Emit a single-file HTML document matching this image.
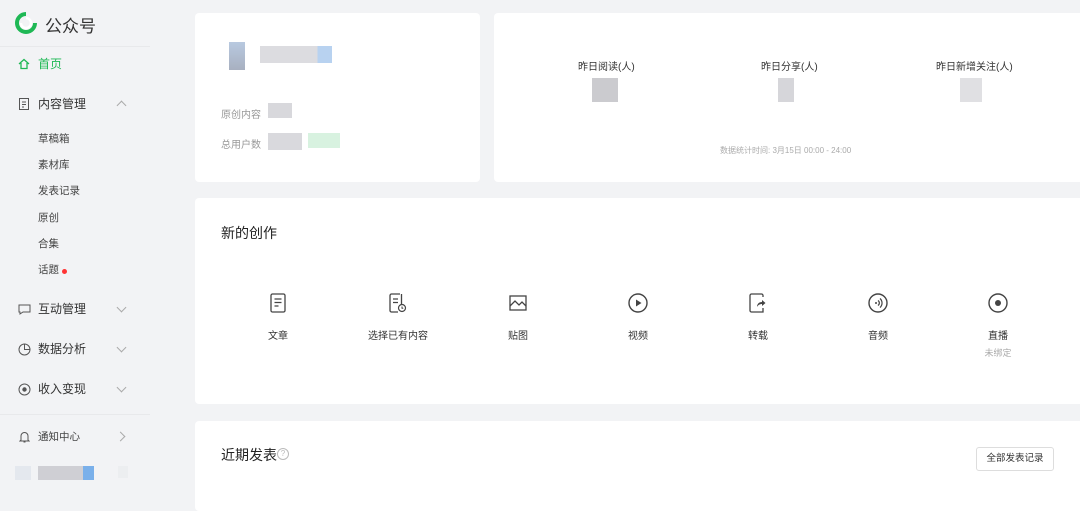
<!DOCTYPE html>
<html><head><meta charset="utf-8"><style>
*{margin:0;padding:0;box-sizing:border-box}
body{width:1080px;height:496px;overflow:hidden;background:#f2f3f5;font-family:"Liberation Sans","Noto Sans CJK SC",sans-serif;color:#333;position:relative}
.a{position:absolute}
.card{position:absolute;background:#fff;border-radius:4px}
.nav{position:absolute;left:38px;font-size:12px;color:#333;line-height:14px}
.sub{position:absolute;left:38px;font-size:10.5px;color:#444;line-height:13px}
.ch{position:absolute;left:118px;width:7px;height:7px;border-right:1px solid #aaa;border-bottom:1px solid #aaa}
.blk{position:absolute}
.it{position:absolute;top:293px;width:120px;text-align:center;font-size:10px;color:#333}
.it svg{display:block;margin:0 auto 14px}
</style></head><body>
<svg class="a" style="left:14px;top:12px" width="24" height="22" viewBox="0 0 24 22"><path d="M12 2a9 9 0 1 0 9 9" stroke="#1fb855" stroke-width="4" fill="none"/><path d="M12 6a5 5 0 1 1-5 5" stroke="#fff" stroke-width="2.5" fill="none"/></svg>
<div class="a" style="left:45px;top:12px;font-size:17px;color:#333">公众号</div>
<div class="a" style="left:0;top:46px;width:150px;height:1px;background:#e8e9eb"></div>
<svg class="a" style="left:18px;top:58px" width="12" height="12" viewBox="0 0 12 12"><path d="M1 6L6 1.5 11 6M3 5v5.5h6V5" stroke="#1fb855" stroke-width="1.3" fill="none"/></svg>
<div class="nav" style="top:57px;color:#1fb855">首页</div>
<svg class="a" style="left:19px;top:98px" width="10" height="12"><rect x=".5" y=".5" width="9" height="11" stroke="#555" fill="none"/><path d="M3 4h4M3 6.5h4M3 9h2" stroke="#555"/></svg>
<div class="nav" style="top:97px">内容管理</div>
<div class="ch" style="top:102px;transform:rotate(-135deg)"></div>
<div class="sub" style="top:133px">草稿箱</div>
<div class="sub" style="top:159px">素材库</div>
<div class="sub" style="top:185px">发表记录</div>
<div class="sub" style="top:212px">原创</div>
<div class="sub" style="top:238px">合集</div>
<div class="sub" style="top:264px">话题</div>
<div class="a" style="left:62px;top:269px;width:5px;height:5px;border-radius:50%;background:#f33"></div>
<svg class="a" style="left:18px;top:304px" width="13" height="11"><path d="M1 1h11v7H5l-3 2V8H1z" stroke="#555" fill="none"/></svg>
<div class="nav" style="top:302px">互动管理</div>
<div class="ch" style="top:304px;transform:rotate(45deg)"></div>
<svg class="a" style="left:18px;top:343px" width="13" height="13"><circle cx="6.5" cy="6.5" r="5.5" stroke="#555" fill="none"/><path d="M6.5 1v5.5H12" stroke="#555" fill="none"/></svg>
<div class="nav" style="top:342px">数据分析</div>
<div class="ch" style="top:344px;transform:rotate(45deg)"></div>
<svg class="a" style="left:18px;top:383px" width="13" height="13"><circle cx="6.5" cy="6.5" r="5.5" stroke="#555" fill="none"/><circle cx="6.5" cy="6.5" r="2.2" fill="#555"/></svg>
<div class="nav" style="top:382px">收入变现</div>
<div class="ch" style="top:384px;transform:rotate(45deg)"></div>
<div class="a" style="left:0;top:414px;width:150px;height:1px;background:#e8e9eb"></div>
<svg class="a" style="left:19px;top:431px" width="11" height="12"><path d="M2 9V5a3.5 3.5 0 0 1 7 0v4l1 1H1zM4.5 11h2" stroke="#555" fill="none"/></svg>
<div class="sub" style="top:431px">通知中心</div>
<div class="ch" style="top:433px;left:117px;transform:rotate(-45deg)"></div>
<div class="blk" style="left:15px;top:466px;width:16px;height:14px;background:#e4e8ee"></div>
<div class="blk" style="left:38px;top:466px;width:56px;height:14px;background:linear-gradient(90deg,#cfcfd4 80%,#7ab0ea 80%)"></div>
<div class="blk" style="left:118px;top:466px;width:10px;height:12px;background:#eceef0"></div>

<div class="card" style="left:195px;top:13px;width:285px;height:169px"></div>
<div class="blk" style="left:229px;top:42px;width:16px;height:28px;background:linear-gradient(#b8c9e0,#a8b0c0)"></div>
<div class="blk" style="left:260px;top:46px;width:72px;height:17px;background:linear-gradient(90deg,#dcdce0 80%,#b8d2f0 80%)"></div>
<div class="a" style="left:221px;top:106px;font-size:10px;color:#999">原创内容</div>
<div class="blk" style="left:268px;top:103px;width:24px;height:15px;background:#d8d8dc"></div>
<div class="a" style="left:221px;top:136px;font-size:10px;color:#999">总用户数</div>
<div class="blk" style="left:268px;top:133px;width:34px;height:17px;background:#d9d9dd"></div>
<div class="blk" style="left:308px;top:133px;width:32px;height:15px;background:#d8f2e0"></div>
<div class="card" style="left:494px;top:13px;width:600px;height:169px"></div>
<div class="a" style="left:578px;top:58px;font-size:10px">昨日阅读(人)</div>
<div class="blk" style="left:592px;top:78px;width:26px;height:24px;background:#cbcbcf"></div>
<div class="a" style="left:761px;top:58px;font-size:10px">昨日分享(人)</div>
<div class="blk" style="left:778px;top:78px;width:16px;height:24px;background:#d6d6da"></div>
<div class="a" style="left:936px;top:58px;font-size:10px">昨日新增关注(人)</div>
<div class="blk" style="left:960px;top:78px;width:22px;height:24px;background:#e0e0e3"></div>
<div class="a" style="left:720px;top:145px;font-size:8px;color:#aaa">数据统计时间: 3月15日 00:00 - 24:00</div>
<div class="card" style="left:195px;top:198px;width:900px;height:206px"></div>
<div class="a" style="left:221px;top:223px;font-size:14px;color:#222">新的创作</div>
<div class="it" style="left:218px"><svg width="16" height="20"><rect x="1" y="1" width="14" height="18" rx="1.5" stroke="#444" stroke-width="1.3" fill="none"/><path d="M4.5 6h7M4.5 9.5h7M4.5 13h4" stroke="#444" stroke-width="1.3"/></svg>文章</div>
<div class="it" style="left:338px"><svg width="18" height="20"><path d="M11 1H2.5A1.5 1.5 0 0 0 1 2.5v15A1.5 1.5 0 0 0 2.5 19H9M12.5 1v10" stroke="#444" stroke-width="1.3" fill="none"/><path d="M4 6h5M4 9.5h5" stroke="#444" stroke-width="1.3"/><circle cx="13" cy="15" r="3.5" stroke="#444" stroke-width="1.2" fill="#fff"/><path d="M13 13.5v1.7h1.3" stroke="#444" fill="none"/></svg>选择已有内容</div>
<div class="it" style="left:458px"><svg width="20" height="20"><rect x="2" y="3" width="16" height="14" stroke="#444" stroke-width="1.3" fill="none"/><path d="M2 13l5-5 4 4 3-3 4 4" stroke="#444" stroke-width="1.3" fill="none"/></svg>贴图</div>
<div class="it" style="left:578px"><svg width="20" height="20"><circle cx="10" cy="10" r="9" stroke="#444" stroke-width="1.4" fill="none"/><path d="M8 6.5v7l5.5-3.5z" fill="#444"/></svg>视频</div>
<div class="it" style="left:698px"><svg width="18" height="20"><path d="M14 4V2.5A1.5 1.5 0 0 0 12.5 1h-10A1.5 1.5 0 0 0 1 2.5v15A1.5 1.5 0 0 0 2.5 19H14v-4" stroke="#444" stroke-width="1.3" fill="none"/><path d="M8 14c0-3 2-5 5-5V7l3.5 3-3.5 3v-2c-2 0-4 1-5 3z" fill="#444"/></svg>转载</div>
<div class="it" style="left:818px"><svg width="20" height="20"><circle cx="10" cy="10" r="9" stroke="#444" stroke-width="1.4" fill="none"/><path d="M10 7.5a3 3 0 0 1 0 5M12 5.5a6 6 0 0 1 0 9" stroke="#444" stroke-width="1.2" fill="none"/><circle cx="8" cy="10" r="1" fill="#444"/></svg>音频</div>
<div class="it" style="left:938px"><svg width="20" height="20"><circle cx="10" cy="10" r="9" stroke="#444" stroke-width="1.4" fill="none"/><circle cx="10" cy="10" r="3" fill="#444"/></svg>直播<div style="color:#aaa;font-size:9px;margin-top:4px">未绑定</div></div>
<div class="card" style="left:195px;top:421px;width:900px;height:90px"></div>
<div class="a" style="left:221px;top:445px;font-size:14px;color:#222">近期发表</div>
<div class="a" style="left:277px;top:448px;width:12px;height:12px;border:1px solid #bbb;border-radius:50%;font-size:8px;color:#bbb;text-align:center;line-height:10px">?</div>
<div class="a" style="left:976px;top:447px;width:78px;height:24px;border:1px solid #ddd;border-radius:3px;font-size:9.5px;color:#333;text-align:center;line-height:22px;background:#fff">全部发表记录</div>
</body></html>
